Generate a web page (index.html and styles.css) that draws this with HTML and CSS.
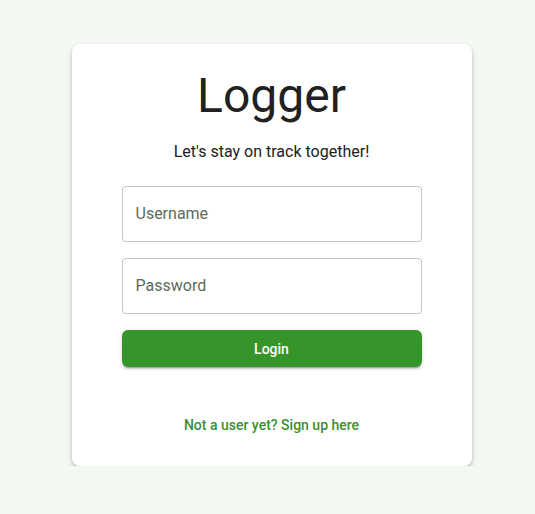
FILE: index.html
```html
<!DOCTYPE html>
<html lang="en">
<head>
<meta charset="utf-8">
<title>Logger</title>
<link rel="stylesheet" href="styles.css">
</head>
<body>
<div class="page">
  <div class="card">
    <h1 class="title">Logger</h1>
    <p class="subtitle">Let's stay on track together!</p>
    <form class="form">
      <div class="field"><input class="input" type="text" placeholder="Username"></div>
      <div class="field"><input class="input" type="password" placeholder="Password"></div>
      <button class="btn" type="button">Login</button>
    </form>
    <a class="link" href="#">Not a user yet? Sign up here</a>
  </div>
</div>
</body>
</html>
```
FILE: styles.css
```css
html, body {
  margin: 0;
  padding: 0;
  background: #f4f8f2;
  font-family: Roboto, "Liberation Sans", sans-serif;
}
.page {
  display: flex;
  justify-content: center;
  padding: 44px 0 0 8px;
}
.card {
  width: 400px;
  box-sizing: border-box;
  background: #ffffff;
  border-radius: 8px;
  box-shadow: 0 3px 5px rgba(0,0,0,0.24), 0 0 2px rgba(0,0,0,0.05);
  padding: 24px 50px 31px;
  display: flex;
  flex-direction: column;
  align-items: center;
}
.title {
  margin: 0;
  font-size: 48px;
  font-weight: 400;
  line-height: 56px;
  color: #212121;
}
.subtitle {
  margin: 14px 0 0;
  font-size: 16px;
  line-height: 28px;
  color: #212121;
}
.form {
  margin-top: 20px;
  width: 100%;
  display: flex;
  flex-direction: column;
  gap: 16px;
}
.field {
  width: 100%;
}
.input {
  display: block;
  width: 100%;
  height: 56px;
  box-sizing: border-box;
  border: 1px solid #c4c4c4;
  border-radius: 4px;
  padding: 0 13px 1px;
  font-family: Roboto, "Liberation Sans", sans-serif;
  font-size: 16px;
  color: #212121;
  background: #fff;
  outline: none;
}
.input::placeholder {
  color: #5d6b56;
  opacity: 1;
}
.btn {
  width: 100%;
  height: 37px;
  border: none;
  border-radius: 6px;
  background: #36952a;
  color: #ffffff;
  font-family: Roboto, "Liberation Sans", sans-serif;
  font-size: 14px;
  font-weight: 500;
  box-shadow: 0 3px 1px -2px rgba(0,0,0,0.2), 0 2px 2px 0 rgba(0,0,0,0.14), 0 1px 5px 0 rgba(0,0,0,0.12);
  cursor: pointer;
}
.link {
  margin-top: 48px;
  font-size: 14px;
  font-weight: 500;
  line-height: 20px;
  color: #3c8f31;
  text-decoration: none;
}
```
